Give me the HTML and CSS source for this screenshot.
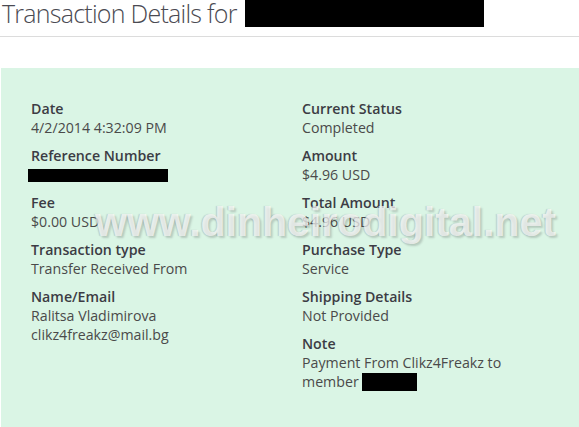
FILE: index.html
```html
<!DOCTYPE html>
<html>
<head>
<meta charset="utf-8">
<link rel="stylesheet" href="styles.css">
</head>
<body>
<div class="page">
  <header class="header">
    <h1 class="title"><span class="title-text">Transaction Details for</span><span class="redact redact-title"></span></h1>
  </header>
  <section class="panel">
    <div class="col">
      <div class="field"><div class="label">Date</div><div class="value">4/2/2014 4:32:09 PM</div></div>
      <div class="field"><div class="label">Reference Number</div><div class="value"><span class="redact redact-ref"></span></div></div>
      <div class="field"><div class="label">Fee</div><div class="value">$0.00 USD</div></div>
      <div class="field"><div class="label">Transaction type</div><div class="value">Transfer Received From</div></div>
      <div class="field"><div class="label">Name/Email</div><div class="value">Ralitsa Vladimirova</div><div class="value">clikz4freakz@mail.bg</div></div>
    </div>
    <div class="col">
      <div class="field"><div class="label">Current Status</div><div class="value">Completed</div></div>
      <div class="field"><div class="label">Amount</div><div class="value">$4.96 USD</div></div>
      <div class="field"><div class="label">Total Amount</div><div class="value">$4.96 USD</div></div>
      <div class="field"><div class="label">Purchase Type</div><div class="value">Service</div></div>
      <div class="field"><div class="label">Shipping Details</div><div class="value">Not Provided</div></div>
      <div class="field"><div class="label">Note</div><div class="value">Payment From Clikz4Freakz to<br>member <span class="redact redact-member"></span></div></div>
    </div>
    <div class="watermark">www.dinheirodigital.net</div>
  </section>
</div>
</body>
</html>
```
FILE: styles.css
```css
html, body {
  margin: 0;
  padding: 0;
  background: #ffffff;
}
body {
  font-family: "Open Sans", "Liberation Sans", sans-serif;
  color: #454545;
  width: 579px;
  height: 427px;
  overflow: hidden;
}
.header {
  height: 36px;
  border-bottom: 1px solid #dcdcdc;
}
.title {
  margin: 0;
  padding-left: 2px;
  font-weight: 300;
  font-size: 25px;
  line-height: 27px;
  letter-spacing: -0.75px;
  color: #4a4a52;
  display: flex;
  align-items: flex-start;
  white-space: nowrap;
}
.redact {
  display: inline-block;
  background: #000;
}
.redact-title {
  width: 239px;
  height: 27px;
  margin-left: 8px;
}
.redact-ref {
  width: 140px;
  height: 13px;
  margin-left: -3px;
  vertical-align: -2px;
}
.redact-member {
  width: 55px;
  height: 18px;
  vertical-align: -4px;
}
.panel {
  position: relative;
  margin-top: 31px;
  margin-left: 1px;
  background: #daf5e5;
  height: 359px;
  display: grid;
  grid-template-columns: 271px 1fr;
  padding: 31px 0 0 30px;
  box-sizing: border-box;
  font-size: 14.2px;
  line-height: 19px;
}
.field {
  margin-bottom: 9px;
}
.label {
  font-weight: 600;
  color: #3c3c44;
}
.value {
  color: #4a4a4a;
}
.watermark {
  position: absolute;
  left: 94px;
  top: 129px;
  font-family: "Liberation Sans", Arial, sans-serif;
  font-weight: bold;
  font-size: 41px;
  line-height: 50px;
  color: rgba(255, 255, 255, 0.7);
  text-shadow: -1px 0 1px rgba(90, 90, 90, 0.25), 2px 2px 2px rgba(60, 60, 60, 0.22);
  pointer-events: none;
  white-space: nowrap;
}
```
